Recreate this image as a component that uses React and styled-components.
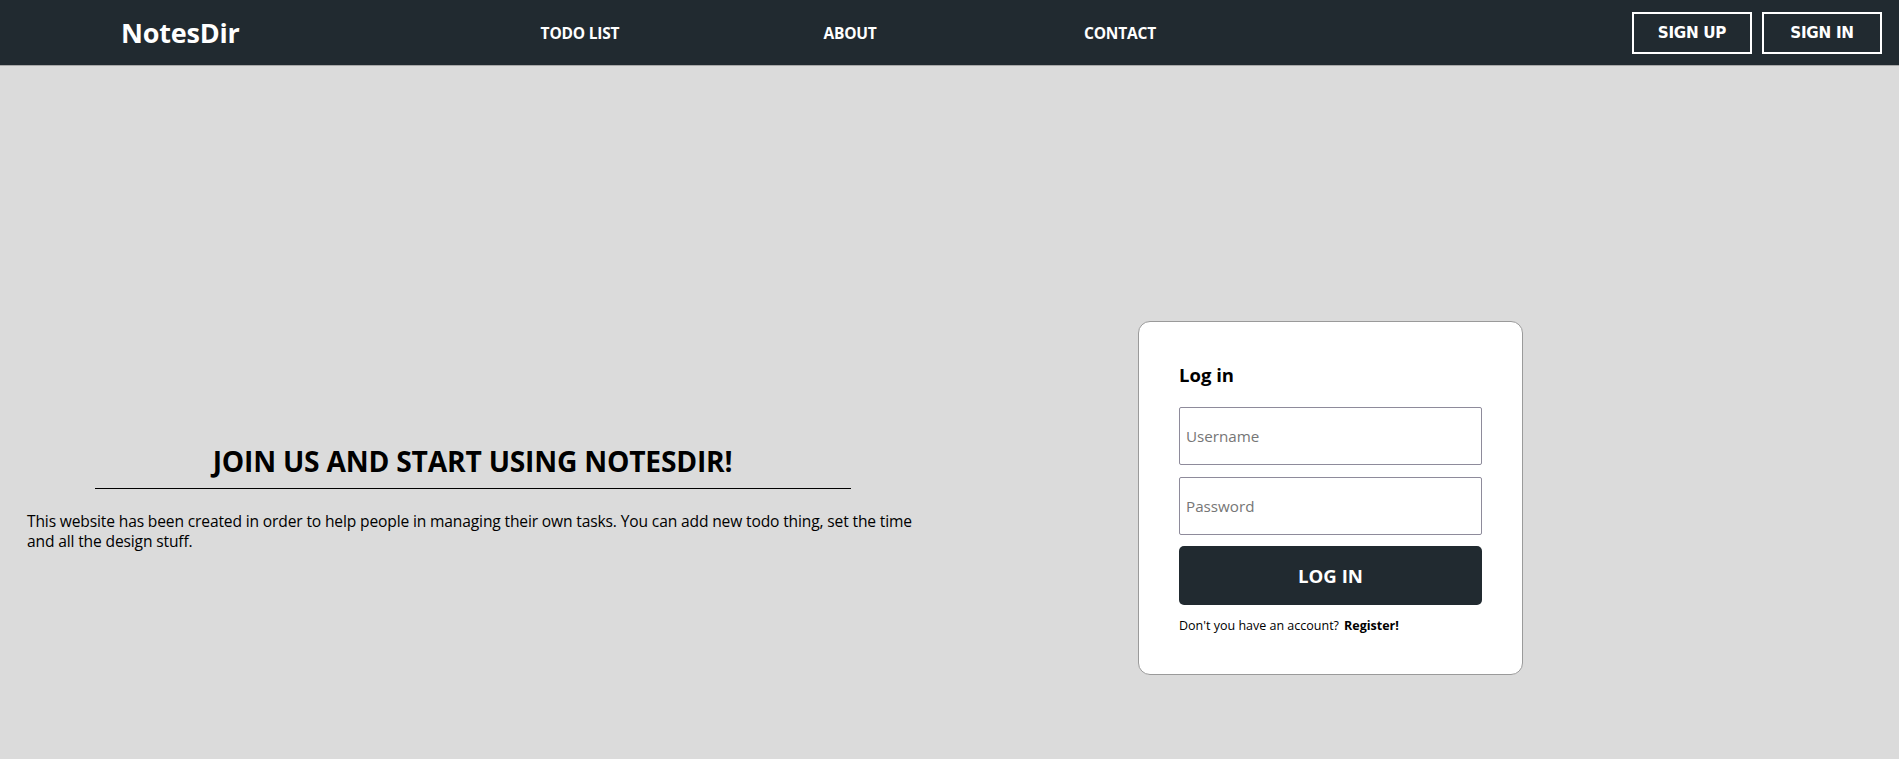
import React from "react";
import styled, { createGlobalStyle } from "styled-components";

const GlobalStyle = createGlobalStyle`
  html, body {
    margin: 0;
    padding: 0;
    background: #dbdbdb;
    font-family: "Open Sans", "Noto Sans", sans-serif;
    color: #000;
  }
  * { box-sizing: border-box; }
`;

const NavBar = styled.header`
  height: 66px;
  background: #212a30;
  border-bottom: 1px solid #a8a8a8;
  display: flex;
  align-items: center;
  padding-right: 17px;
`;

const Logo = styled.div`
  width: 445px;
  padding-left: 121px;
  font-size: 27px;
  font-weight: 700;
  color: #fff;
  letter-spacing: -0.2px;
`;

const NavLinks = styled.nav`
  display: flex;
`;

const NavLink = styled.a`
  width: 270px;
  text-align: center;
  font-size: 15.5px;
  font-weight: 700;
  color: #fff;
  text-decoration: none;
  letter-spacing: -0.2px;
`;

const AuthGroup = styled.div`
  margin-left: auto;
  display: flex;
  gap: 10px;
`;

const OutlineButton = styled.button`
  width: 120px;
  height: 42px;
  background: transparent;
  border: 2px solid #fff;
  color: #fff;
  font-family: "DejaVu Sans", Verdana, sans-serif;
  font-weight: 700;
  font-size: 15.2px;
  letter-spacing: -0.3px;
  cursor: pointer;
`;

const Main = styled.main`
  display: flex;
  align-items: center;
  min-height: 863px;
`;

const Intro = styled.section`
  width: 945px;
`;

const Heading = styled.h2`
  margin: 0;
  text-align: center;
  font-size: 28.2px;
  font-weight: 700;
  line-height: 34px;
  letter-spacing: -0.2px;
`;

const Rule = styled.hr`
  width: 80%;
  margin: 10px auto 22px;
  border: none;
  border-top: 1px solid #000;
`;

const Text = styled.p`
  margin: 0;
  padding: 0 27px;
  font-size: 15.6px;
  line-height: 20px;
  letter-spacing: -0.15px;
`;

const AuthColumn = styled.section`
  padding-left: 193px;
`;

const Card = styled.form`
  width: 385px;
  background: #fff;
  border: 1px solid #9a9a9a;
  border-radius: 12px;
  padding: 40px 40px 39px 40px;
  display: flex;
  flex-direction: column;
`;

const CardTitle = styled.h3`
  margin: 0 0 19px;
  font-size: 18.5px;
  line-height: 26px;
  font-weight: 700;
`;

const Field = styled.input`
  height: 58px;
  width: 100%;
  border: 1px solid #8e8b9b;
  border-radius: 2px;
  padding: 0 6px;
  font-family: "Open Sans", "Noto Sans", sans-serif;
  font-size: 15.2px;
  margin-bottom: ${(p) => p.$gap}px;
  outline: none;
  &::placeholder {
    color: #767676;
    opacity: 1;
  }
`;

const SubmitButton = styled.button`
  height: 59px;
  width: 100%;
  border: none;
  border-radius: 5px;
  background: #212a30;
  color: #fff;
  font-family: "Open Sans", "Noto Sans", sans-serif;
  font-size: 18.6px;
  font-weight: 700;
  cursor: pointer;
`;

const Footnote = styled.p`
  margin: 12px 0 0;
  font-size: 12.5px;
  line-height: 18px;
`;

const RegisterLink = styled.a`
  font-weight: 700;
  color: #000;
  text-decoration: none;
  margin-left: 5px;
`;

export default function App() {
  return (
    <>
      <GlobalStyle />
      <NavBar>
        <Logo>NotesDir</Logo>
        <NavLinks>
          <NavLink href="#">TODO LIST</NavLink>
          <NavLink href="#">ABOUT</NavLink>
          <NavLink href="#">CONTACT</NavLink>
        </NavLinks>
        <AuthGroup>
          <OutlineButton>SIGN UP</OutlineButton>
          <OutlineButton>SIGN IN</OutlineButton>
        </AuthGroup>
      </NavBar>
      <Main>
        <Intro>
          <Heading>JOIN US AND START USING NOTESDIR!</Heading>
          <Rule />
          <Text>
            This website has been created in order to help people in managing their own tasks. You can add new todo thing, set the time and all the design stuff.
          </Text>
        </Intro>
        <AuthColumn>
          <Card onSubmit={(e) => e.preventDefault()}>
            <CardTitle>Log in</CardTitle>
            <Field placeholder="Username" $gap={12} />
            <Field type="password" placeholder="Password" $gap={11} />
            <SubmitButton type="submit">LOG IN</SubmitButton>
            <Footnote>
              Don't you have an account?
              <RegisterLink href="#">Register!</RegisterLink>
            </Footnote>
          </Card>
        </AuthColumn>
      </Main>
    </>
  );
}
